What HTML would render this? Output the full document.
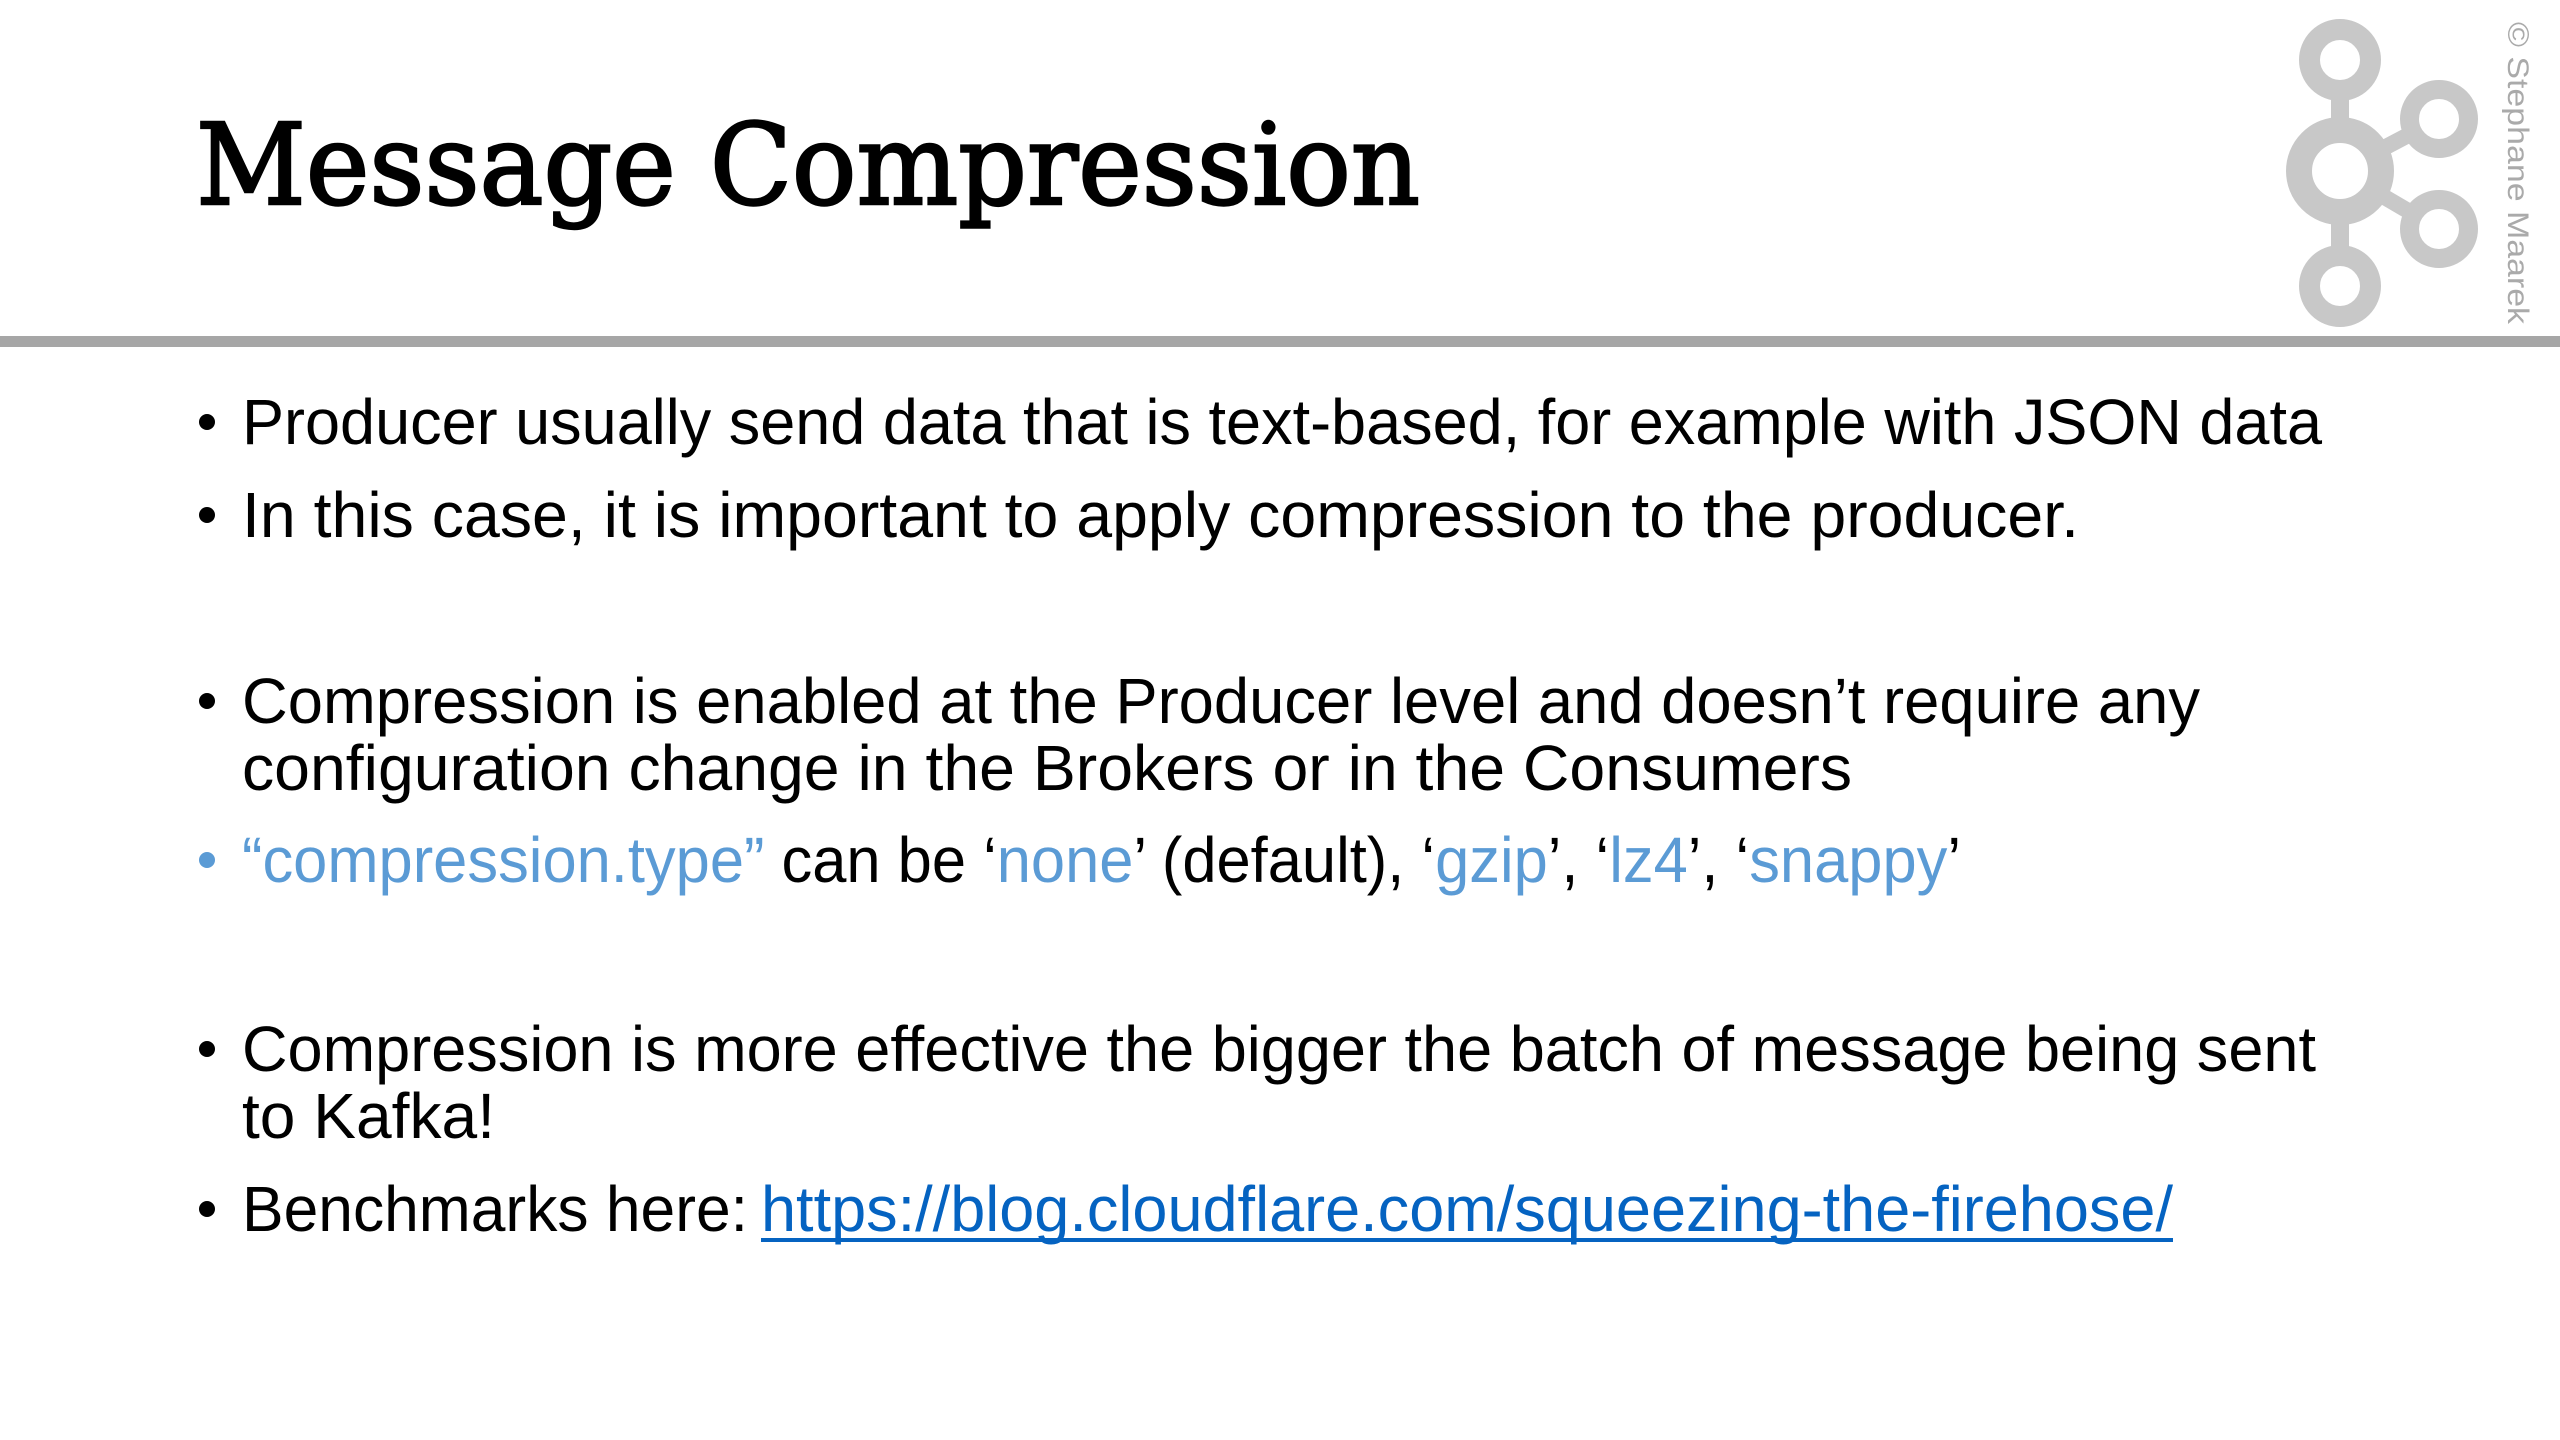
<!DOCTYPE html>
<html><head><meta charset="utf-8"><style>
html,body{margin:0;padding:0;background:#fff;width:2560px;height:1440px;overflow:hidden}
svg{display:block}
.b{font-family:"Liberation Sans",sans-serif;font-size:64px;fill:#000}
.bl{fill:#5b9bd5}
</style></head><body>
<svg width="2560" height="1440" viewBox="0 0 2560 1440" xmlns="http://www.w3.org/2000/svg">
<text x="196" y="204" font-family="DejaVu Serif, serif" font-size="112" textLength="1224" lengthAdjust="spacingAndGlyphs" fill="#000" stroke="#000" stroke-width="2.5">Message Compression</text>
<rect x="0" y="336" width="2560" height="11" fill="#a6a6a6"/>
<g fill="none" stroke="#c8c8c8">
<line x1="2340" y1="60" x2="2340" y2="286" stroke-width="18"/>
<line x1="2340" y1="171" x2="2439" y2="119" stroke-width="16"/>
<line x1="2340" y1="171" x2="2439" y2="229" stroke-width="16"/>
</g>
<g fill="#fff" stroke="#c8c8c8">
<circle cx="2340" cy="60" r="30.5" stroke-width="21"/>
<circle cx="2439" cy="119" r="29.5" stroke-width="19"/>
<circle cx="2439" cy="229" r="29.5" stroke-width="19"/>
<circle cx="2340" cy="286" r="30.5" stroke-width="21"/>
<circle cx="2340" cy="171" r="41" stroke-width="26"/>
</g>
<text transform="translate(2508,22) rotate(90)" font-family="Liberation Sans, sans-serif" font-size="30" fill="#aaa" textLength="302" lengthAdjust="spacingAndGlyphs">© Stephane Maarek</text>
<g fill="#000">
<circle cx="207" cy="422" r="8"/><circle cx="207" cy="515" r="8"/><circle cx="207" cy="701" r="8"/>
<circle cx="207" cy="860" r="8" fill="#5b9bd5"/><circle cx="207" cy="1049" r="8"/><circle cx="207" cy="1209" r="8"/>
</g>
<text class="b" x="242" y="444" textLength="2080" lengthAdjust="spacingAndGlyphs">Producer usually send data that is text-based, for example with JSON data</text>
<text class="b" x="242" y="537" textLength="1837" lengthAdjust="spacingAndGlyphs">In this case, it is important to apply compression to the producer.</text>
<text class="b" x="242" y="723" textLength="1958" lengthAdjust="spacingAndGlyphs">Compression is enabled at the Producer level and doesn’t require any</text>
<text class="b" x="242" y="790" textLength="1610" lengthAdjust="spacingAndGlyphs">configuration change in the Brokers or in the Consumers</text>
<text class="b" x="242" y="882" textLength="1719" lengthAdjust="spacingAndGlyphs"><tspan class="bl">“compression.type”</tspan> can be ‘<tspan class="bl">none</tspan>’ (default), ‘<tspan class="bl">gzip</tspan>’, ‘<tspan class="bl">lz4</tspan>’, ‘<tspan class="bl">snappy</tspan>’</text>
<text class="b" x="242" y="1071" textLength="2074" lengthAdjust="spacingAndGlyphs">Compression is more effective the bigger the batch of message being sent</text>
<text class="b" x="242" y="1138" textLength="253" lengthAdjust="spacingAndGlyphs">to Kafka!</text>
<text class="b" x="242" y="1231" textLength="506" lengthAdjust="spacingAndGlyphs">Benchmarks here:</text>
<text class="b" x="761" y="1231" style="fill:#0563c1" textLength="1412" lengthAdjust="spacingAndGlyphs">https://blog.cloudflare.com/squeezing-the-firehose/</text>
<rect x="761" y="1238" width="1412" height="4" fill="#0563c1"/>
</svg>
</body></html>
